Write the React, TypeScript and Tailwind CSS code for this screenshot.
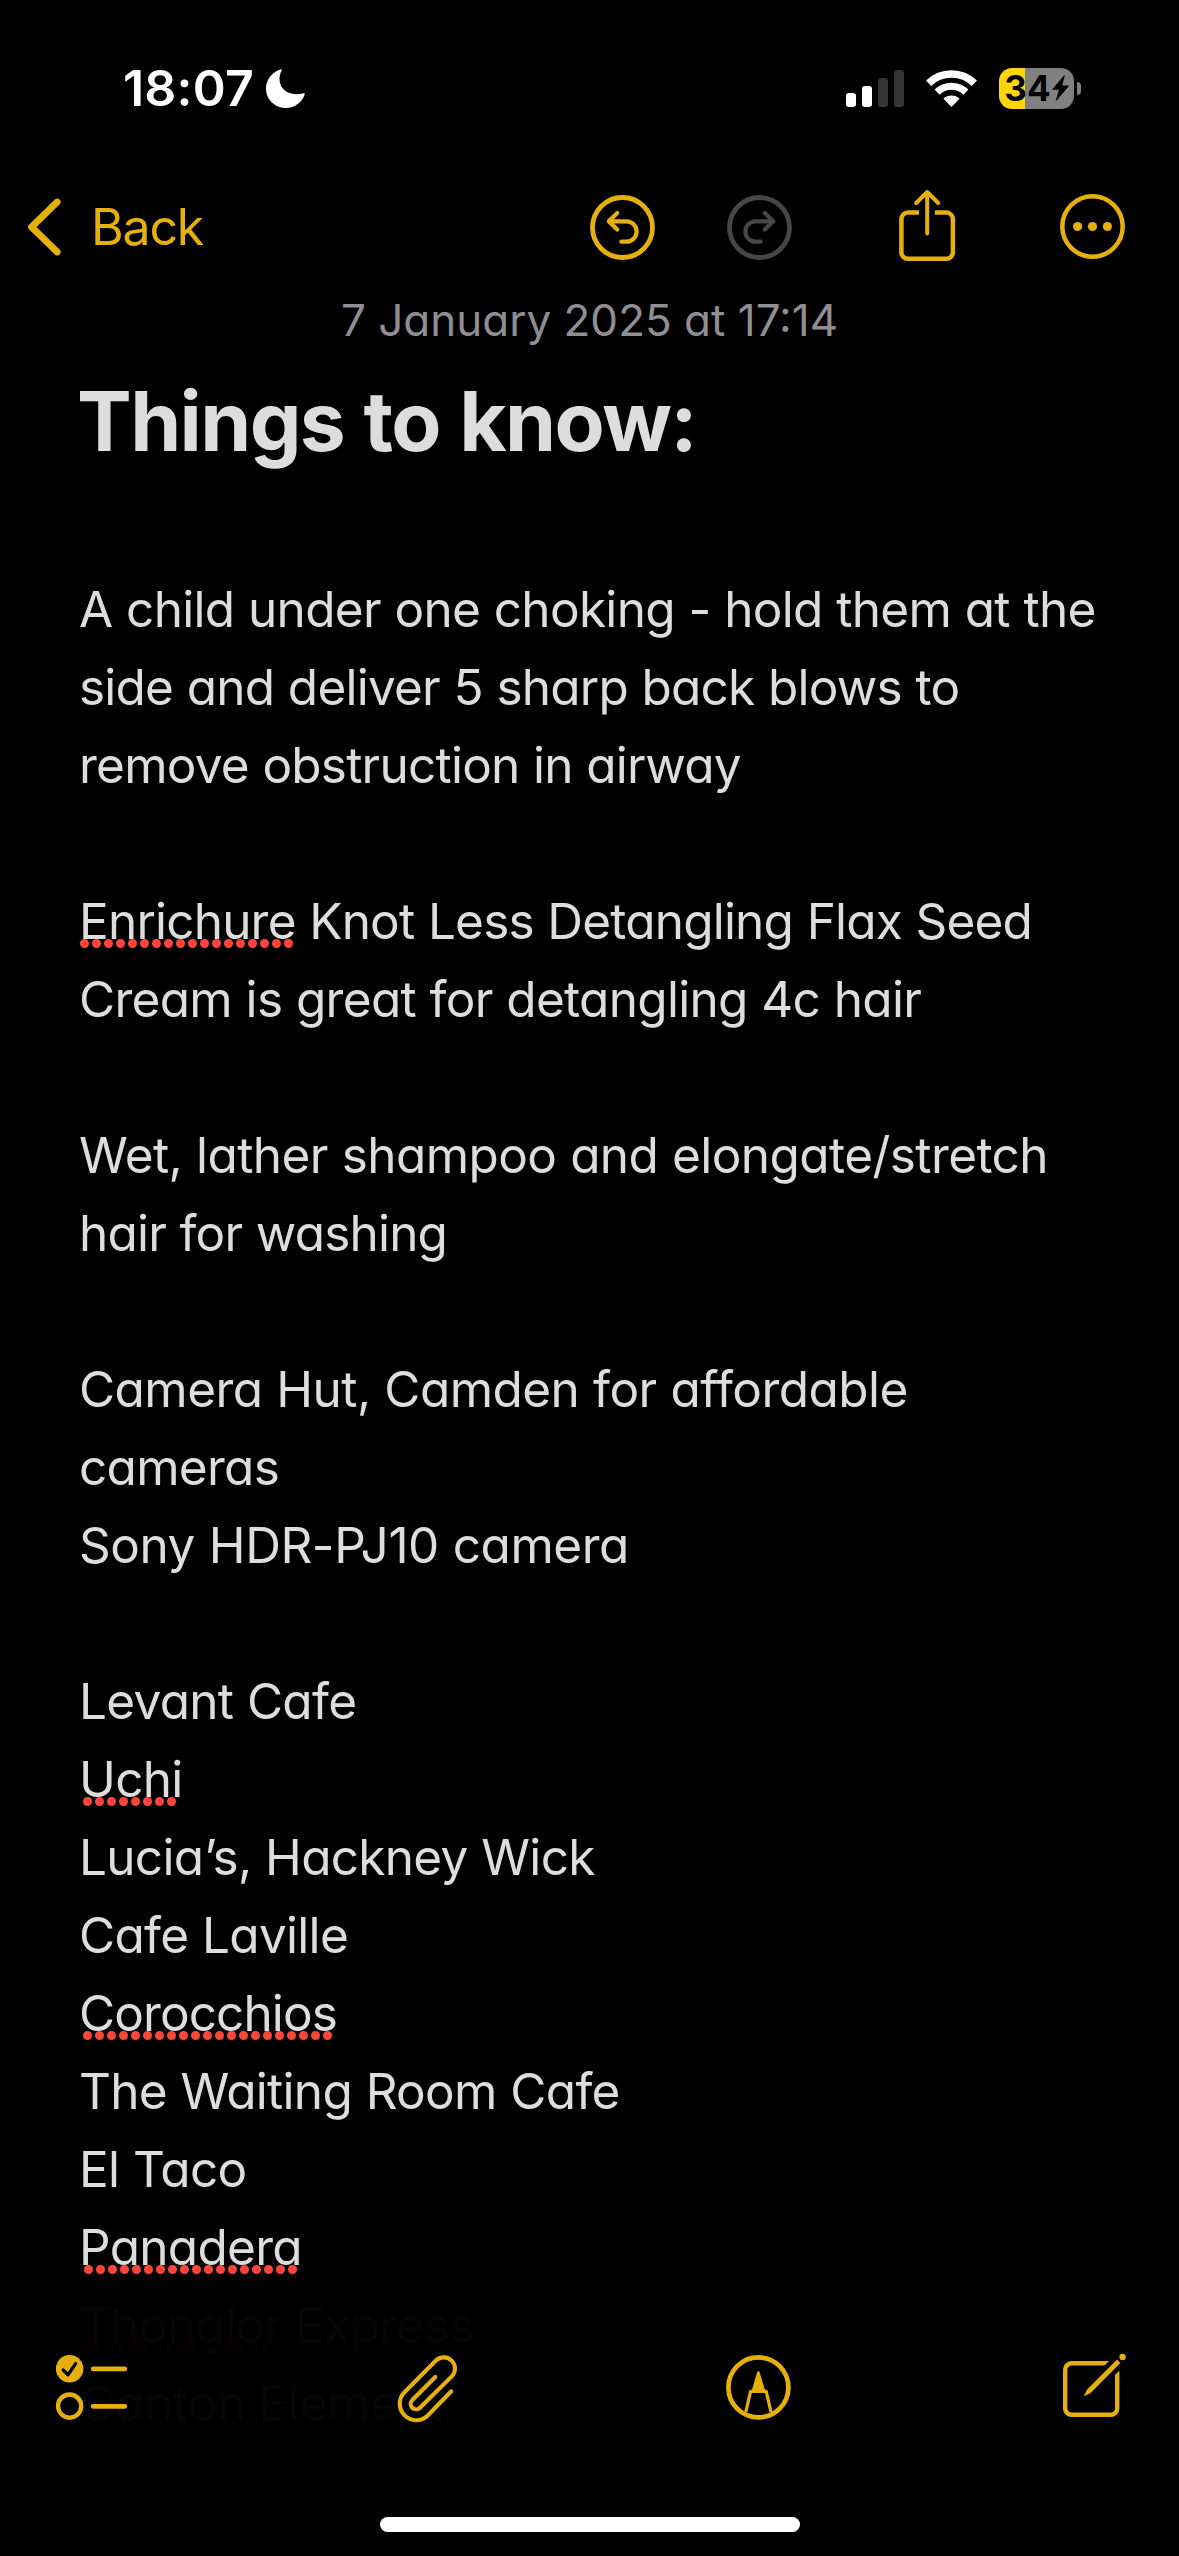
import React from 'react';

interface NoteLine {
  text: string;
  // misspelled word at the start of the line
  flagged?: string;
  dots?: number;
  inset?: string;
  tracking?: string;
}

const NOTE_LINES: NoteLine[] = [
  { text: 'A child under one choking - hold them at the' },
  { text: 'side and deliver 5 sharp back blows to', tracking: 'tracking-[-0.77px]' },
  { text: 'remove obstruction in airway', tracking: 'tracking-[-0.77px]' },
  { text: '' },
  { flagged: 'Enrichure', text: ' Knot Less Detangling Flax Seed', dots: 18, inset: 'left-px', tracking: 'tracking-[-0.8px]' },
  { text: 'Cream is great for detangling 4c hair' },
  { text: '' },
  { text: 'Wet, lather shampoo and elongate/stretch', tracking: 'tracking-[-0.57px]' },
  { text: 'hair for washing', tracking: 'tracking-[-0.8px]' },
  { text: '' },
  { text: 'Camera Hut, Camden for affordable', tracking: 'tracking-[-0.55px]' },
  { text: 'cameras' },
  { text: 'Sony HDR-PJ10 camera', tracking: 'tracking-[-0.45px]' },
  { text: '' },
  { text: 'Levant Cafe' },
  { flagged: 'Uchi', text: '', dots: 8, inset: 'left-[4px]' },
  { text: 'Lucia’s, Hackney Wick' },
  { text: 'Cafe Laville' },
  { flagged: 'Corocchios', text: '', dots: 21, inset: 'left-[4px]', tracking: 'tracking-[-0.9px]' },
  { text: 'The Waiting Room Cafe' },
  { text: 'El Taco' },
  { flagged: 'Panadera', text: '', dots: 18, inset: 'left-[5px]' },
  { flagged: 'Thonglor', text: ' Express', dots: 17, inset: 'left-px', tracking: 'tracking-[-1px]' },
  { text: 'Canton Element' },
];

function StatusBar() {
  return (
    <div className="flex h-[176px] items-center justify-between pl-[123px] pr-[98px] text-white">
      <div className="flex items-center gap-[12px]">
        <span className="text-[50px] font-semibold leading-none tracking-[0.2px]">18:07</span>
        <svg className="h-[41px] w-[40px]" viewBox="0 0 40 41" fill="currentColor">
          <path d="M14.8 1.2C6 4 0 11.8 0 20.5C0 31.5 9 40 20 40C28.5 40 35.5 35 38.7 26.6C39 25.6 38.4 25 37.4 25.3C27 28.3 13.5 24 13.5 11C13.5 8 14.2 5 15.6 2.4C16 1.5 15.6 1 14.8 1.2Z" />
        </svg>
      </div>

      <div className="flex items-center">
        <div className="flex h-[37px] items-end gap-[6px]">
          <span className="h-[14px] w-[10px] rounded-[3px] bg-white" />
          <span className="h-[21px] w-[10px] rounded-[3px] bg-white" />
          <span className="h-[29px] w-[10px] rounded-[3px] bg-[#333333]" />
          <span className="h-[37px] w-[10px] rounded-[3px] bg-[#333333]" />
        </div>
        <svg className="ml-[22px] h-[37px] w-[51px]" viewBox="0 0 51 37" fill="none">
          <path d="M2.6 13.3A33 33 0 0 1 48.4 13.3" stroke="currentColor" strokeWidth="7.5" />
          <path d="M11.1 22.1A20.7 20.7 0 0 1 39.9 22.1" stroke="currentColor" strokeWidth="7.2" />
          <path d="M25.5 37L17.5 28.7A11.5 11.5 0 0 1 33.5 28.7Z" fill="currentColor" />
        </svg>
        <div className="ml-[22px] flex items-center gap-[3px]">
          <div className="flex h-[41px] w-[75px] items-center justify-center gap-[1px] rounded-[13px] bg-linear-to-r from-[#ffd60a] from-[26px] to-[#808080] to-[26px] text-black">
            <span className="text-[35px] font-bold leading-none">34</span>
            <svg className="h-[26px] w-[17px]" viewBox="0 0 17 26">
              <path d="M12.3 0.8L0.8 14.2H7.6L4.4 25.2L16.4 11H9.6Z" fill="currentColor" stroke="currentColor" strokeLinejoin="round" />
            </svg>
          </div>
          <span className="h-[13px] w-[4px] rounded-r-full bg-[#808080]" />
        </div>
      </div>
    </div>
  );
}

function UndoIcon({ className }: { className?: string }) {
  return (
    <svg className={`h-[66px] w-[65px] ${className || ''}`} viewBox="0 0 65 66" fill="none" stroke="currentColor" strokeWidth="4.2" strokeLinecap="round" strokeLinejoin="round">
      <circle cx="32.5" cy="33.5" r="30" strokeWidth="4.8" />
      <path d="M27.2 19L18.8 27.3L27.2 35.6" />
      <path d="M19 27.3H36.4A10.2 10.2 0 0 1 36.4 47.7H31.3" />
    </svg>
  );
}

function NavBar() {
  return (
    <div className="flex h-[102px] items-center justify-between pl-[26px] pr-[54px] text-[#e6b00c]">
      <button className="flex items-center gap-[27px]">
        <svg className="h-[61px] w-[38px]" viewBox="0 0 38 61" fill="none" stroke="currentColor" strokeWidth="6.8" strokeLinecap="round" strokeLinejoin="round">
          <path d="M31.2 5L5.6 30L31.2 55" />
        </svg>
        <span className="text-[50px] leading-none tracking-[-1.2px]">Back</span>
      </button>
      <div className="flex items-center">
        <UndoIcon />
        <UndoIcon className="ml-[72px] -scale-x-100 text-[#464649]" />
        <svg className="ml-[105px] h-[78px] w-[61px]" viewBox="0 0 61 78" fill="none" stroke="currentColor" strokeWidth="4.5" strokeLinejoin="round">
          <path d="M22 24.6H10.9A6.5 6.5 0 0 0 4.4 31.1V64.2A6.5 6.5 0 0 0 10.9 70.7H49.4A6.5 6.5 0 0 0 55.9 64.2V31.1A6.5 6.5 0 0 0 49.4 24.6H37.8" />
          <path d="M30.2 4.4V45.5M19.2 15L30.2 4L41.2 15" strokeWidth="4" strokeLinecap="round" />
        </svg>
        <svg className="ml-[102px] h-[66px] w-[65px]" viewBox="0 0 65 66" fill="none">
          <circle cx="32.5" cy="32.5" r="30.2" stroke="currentColor" strokeWidth="4.5" />
          <g fill="currentColor">
            <circle cx="17.6" cy="32.5" r="4.6" />
            <circle cx="32.5" cy="32.5" r="4.6" />
            <circle cx="47.4" cy="32.5" r="4.6" />
          </g>
        </svg>
      </div>
    </div>
  );
}

function Line({ line }: { line: NoteLine }) {
  return (
    <p className={`h-[78px] whitespace-pre ${line.tracking || 'tracking-[-0.7px]'}`}>
      {line.flagged && (
        <span className="relative inline-block">
          {line.flagged}
          <span className={`absolute top-[57px] flex gap-[3px] ${line.inset}`}>
            {Array.from({ length: line.dots || 0 }, (_, i) => (
              <span key={i} className="size-[9px] shrink-0 rounded-full bg-[#ff453a]" />
            ))}
          </span>
        </span>
      )}
      {line.text}
    </p>
  );
}

function Toolbar() {
  return (
    <div className="absolute inset-x-0 bottom-0 h-[249px] bg-black/98">
      <div className="flex h-[161px] items-center justify-between pl-[56px] pr-[52px] text-[#e6b00c]">
        {/* Checklist */}
        <svg className="h-[71px] w-[72px]" viewBox="0 0 72 71" fill="none" strokeLinecap="round" strokeLinejoin="round">
          <circle cx="13.6" cy="16.8" r="13.8" fill="currentColor" />
          <path d="M7.2 18L12 22.8L19.6 11.6" stroke="black" strokeWidth="3.3" />
          <circle cx="13.6" cy="54.1" r="11.6" stroke="currentColor" strokeWidth="4.4" />
          <path d="M37.2 16.9H68.8M37.2 54.3H68.8" stroke="currentColor" strokeWidth="4.8" />
        </svg>

        {/* Attachment */}
        <svg className="h-[71px] w-[62px]" viewBox="0 0 62 71" fill="none" stroke="currentColor" strokeWidth="4.1" strokeLinecap="round">
          <path d="M39.3 25L15.9 48.5A5.4 5.4 0 0 0 23.5 56.1L56.2 23.9A11.2 11.2 0 0 0 40.4 8.1L8 40.7A16.5 16.5 0 0 0 31.3 64L55.3 39.3" />
        </svg>

        {/* Markup */}
        <svg className="h-[71px] w-[66px]" viewBox="0 0 66 71" fill="none" stroke="currentColor" strokeLinejoin="round">
          <circle cx="32.4" cy="35.4" r="30" strokeWidth="4.7" />
          <path d="M32.4 20.6L26.6 39.8H38.2Z" fill="currentColor" strokeWidth="2.6" />
          <path d="M19.8 60L24.6 39.4H40.2L45 60" strokeWidth="3.2" />
        </svg>

        {/* Compose */}
        <svg className="h-[71px] w-[67px]" viewBox="0 0 67 71">
          <rect x="5.2" y="11.2" width="52" height="51.6" rx="6.4" fill="none" stroke="currentColor" strokeWidth="4.4" />
          <path d="M34 34L64 4" stroke="black" strokeWidth="14" />
          <path d="M57 7.6L60.4 11L30.6 41L24.6 43.9L24.1 43.4L27.1 37.5Z" fill="currentColor" />
          <circle cx="62.6" cy="5" r="3.2" fill="currentColor" />
        </svg>
      </div>
      <div className="mx-auto mt-[49px] h-[15px] w-[420px] rounded-full bg-white" />
    </div>
  );
}

export default function App() {
  return (
    <div className="relative flex h-[2556px] w-[1179px] flex-col overflow-hidden bg-black font-[Inter,'Liberation_Sans',sans-serif]">
      <StatusBar />
      <NavBar />
      <main className="[font-feature-settings:'cv11']">
        <time className="block h-[84px] text-center text-[44px] leading-[84px] text-[#8e8e93]">7 January 2025 at 17:14</time>
        <article className="pl-[79px] text-[#dddddd]">
          <h1 className="-ml-[2px] h-[208px] text-[82px] font-bold leading-[120px] tracking-[-1.6px] [word-spacing:1.5px]">Things to know:</h1>
          <div className="text-[49.5px] leading-[78px] [word-spacing:0.4px]">
            {NOTE_LINES.map((line, i) => (
              <Line key={i} line={line} />
            ))}
          </div>
        </article>
      </main>
      <Toolbar />
    </div>
  );
}
